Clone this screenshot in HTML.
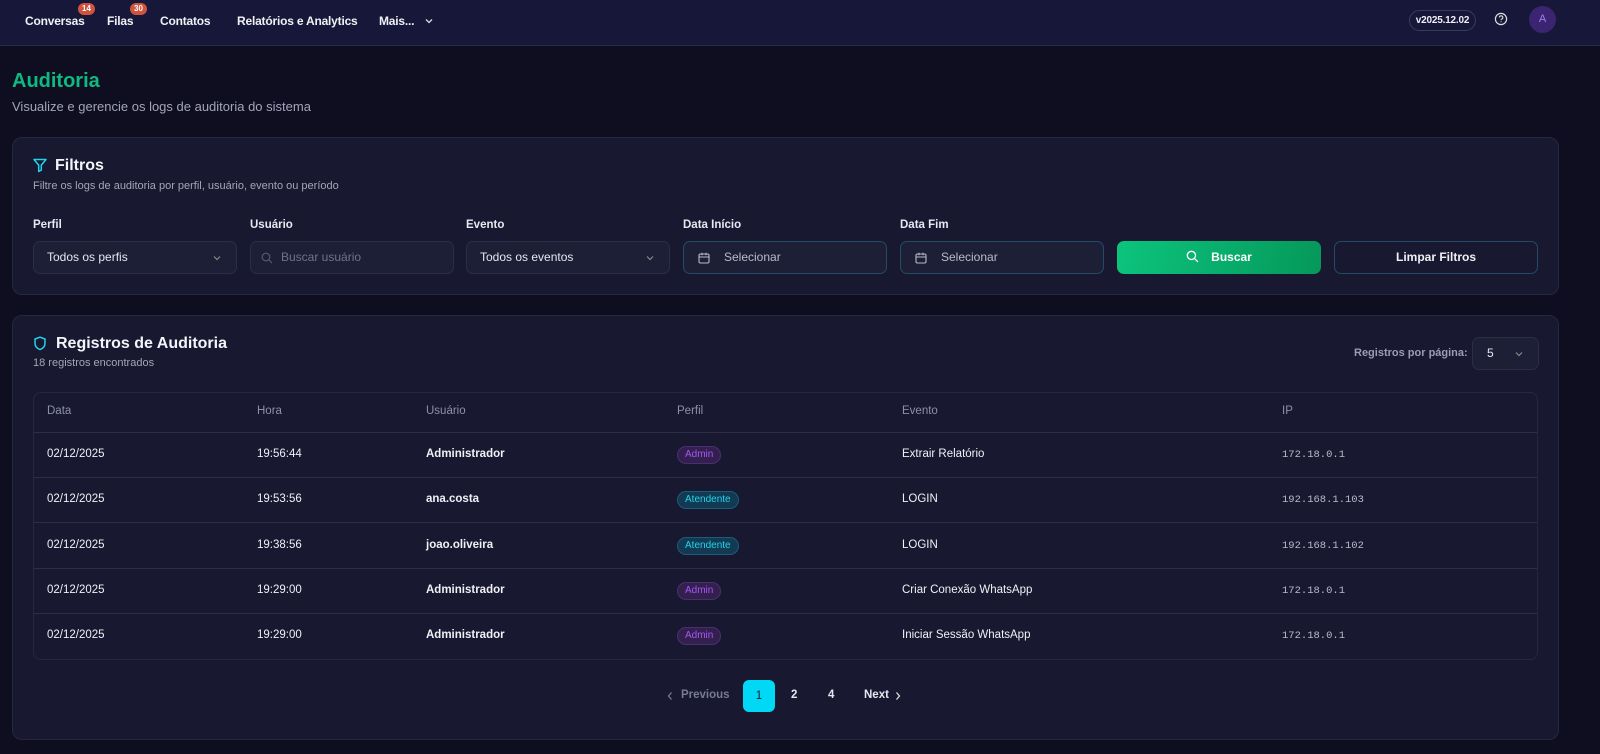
<!DOCTYPE html>
<html><head><meta charset="utf-8"><style>
*{box-sizing:border-box;margin:0;padding:0}
body{width:1600px;height:754px;overflow:hidden;background:#0e0e20;font-family:"Liberation Sans",sans-serif;color:#e6e7f0;position:relative}
.abs{position:absolute}
.nav{left:0;top:0;width:1600px;height:46px;background:#17173a;border-bottom:1px solid #2a2c4a}
.nav span.l{position:absolute;top:14px;font-size:12px;font-weight:bold;color:#f0f0f5;letter-spacing:-0.2px}
.badge{position:absolute;top:3px;height:12px;border-radius:6px;background:#d0533e;color:#fff;font-size:8px;font-weight:bold;padding:0 4px;line-height:12px}
.card{background:#181830;border:1px solid #26283f;border-radius:10px}
.lab{font-size:11.5px;font-weight:bold;color:#e8e8f0;top:219px}
.inp{top:241px;height:33px;width:204px;border:1px solid #2b2e45;background:#1d1f36;border-radius:7px;font-size:12px;color:#e6e7f0;padding:0 13px;line-height:31px}
.th{font-size:11.5px;color:#8e91a8;top:405px}
.cell{font-size:11.5px;color:#f0f0f5}
.mono{font-family:"Liberation Mono",monospace;font-size:10.5px;color:#b8bacb}
.pill{font-size:10px;border-radius:9px;padding:0 7px;height:18px;line-height:16px}
.adm{background:#33204f;border:1px solid #4a2e72;color:#a855f7}
.ate{background:#123a52;border:1px solid #1d5b78;color:#22d3ee}
.hr{left:33px;width:1504px;height:1px;background:#2b2e45}
</style></head><body>
<div class="abs nav">
<span class="l" style="left:25px">Conversas</span><span class="badge" style="left:78px">14</span>
<span class="l" style="left:107px">Filas</span><span class="badge" style="left:130px">30</span>
<span class="l" style="left:160px">Contatos</span>
<span class="l" style="left:237px">Relatórios e Analytics</span>
<span class="l" style="left:379px">Mais...</span>
<svg class="abs" style="left:424px;top:16px" width="10" height="10" viewBox="0 0 10 10"><path d="M2 3.5l3 3 3-3" fill="none" stroke="#ddd" stroke-width="1.3"/></svg>
<div class="abs" style="left:1409px;top:10px;width:67px;height:21px;border:1px solid #3a3d58;border-radius:11px;font-size:10px;font-weight:bold;text-align:center;line-height:19px;color:#f0f0f5;letter-spacing:-0.2px">v2025.12.02</div>
<svg class="abs" style="left:1494px;top:12px" width="14" height="14" viewBox="0 0 14 14"><circle cx="7" cy="7" r="5.6" fill="none" stroke="#ddd" stroke-width="1.2"/><path d="M5.4 5.5a1.7 1.7 0 1 1 2.2 1.6c-.5.2-.6.5-.6 1" fill="none" stroke="#ddd" stroke-width="1.1"/><circle cx="7" cy="9.8" r=".6" fill="#ddd"/></svg>
<div class="abs" style="left:1529px;top:6px;width:27px;height:27px;border-radius:50%;background:#3b2470;color:#a87bf5;font-size:11px;text-align:center;line-height:27px">A</div>
</div>
<div class="abs" style="left:12px;top:70px;font-size:20px;font-weight:bold;color:#10b981">Auditoria</div>
<div class="abs" style="left:12px;top:99px;font-size:13px;color:#a3a5b8">Visualize e gerencie os logs de auditoria do sistema</div>

<div class="abs card" style="left:12px;top:137px;width:1547px;height:158px"></div>
<svg class="abs" style="left:32px;top:157px" width="16" height="16" viewBox="0 0 16 16"><path d="M2 2.5h12l-4.7 5.6v5l-2.6 1.4V8.1z" fill="none" stroke="#22d3ee" stroke-width="1.5" stroke-linejoin="round"/></svg>
<div class="abs" style="left:55px;top:157px;font-size:16px;font-weight:bold;color:#f4f4fa">Filtros</div>
<div class="abs" style="left:33px;top:180px;font-size:11px;color:#a3a5b8">Filtre os logs de auditoria por perfil, usuário, evento ou período</div>
<div class="abs lab" style="left:33px">Perfil</div>
<div class="abs lab" style="left:250px">Usuário</div>
<div class="abs lab" style="left:466px">Evento</div>
<div class="abs lab" style="left:683px">Data Início</div>
<div class="abs lab" style="left:900px">Data Fim</div>
<div class="abs inp" style="left:33px">Todos os perfis<svg class="abs" style="right:14px;top:11px" width="10" height="10" viewBox="0 0 10 10"><path d="M2 3.5l3 3 3-3" fill="none" stroke="#888" stroke-width="1.2"/></svg></div>
<div class="abs inp" style="left:250px;padding-left:30px;color:#6f7288">Buscar usuário<svg class="abs" style="left:10px;top:10px" width="12" height="12" viewBox="0 0 12 12"><circle cx="5" cy="5" r="3.8" fill="none" stroke="#555870" stroke-width="1.2"/><path d="M8 8l3 3" stroke="#555870" stroke-width="1.2"/></svg></div>
<div class="abs inp" style="left:466px">Todos os eventos<svg class="abs" style="right:14px;top:11px" width="10" height="10" viewBox="0 0 10 10"><path d="M2 3.5l3 3 3-3" fill="none" stroke="#888" stroke-width="1.2"/></svg></div>
<div class="abs inp" style="left:683px;padding-left:40px;border-color:#244a66;color:#b8bacb">Selecionar<svg class="abs" style="left:14px;top:10px" width="12" height="12" viewBox="0 0 12 12"><rect x="1" y="2" width="10" height="9" rx="1.5" fill="none" stroke="#b8bacb" stroke-width="1.1"/><path d="M1 5h10M4 .8v2.4M8 .8v2.4" stroke="#b8bacb" stroke-width="1.1"/></svg></div>
<div class="abs inp" style="left:900px;padding-left:40px;border-color:#244a66;color:#b8bacb">Selecionar<svg class="abs" style="left:14px;top:10px" width="12" height="12" viewBox="0 0 12 12"><rect x="1" y="2" width="10" height="9" rx="1.5" fill="none" stroke="#b8bacb" stroke-width="1.1"/><path d="M1 5h10M4 .8v2.4M8 .8v2.4" stroke="#b8bacb" stroke-width="1.1"/></svg></div>
<div class="abs" style="left:1117px;top:241px;width:204px;height:33px;border-radius:7px;background:linear-gradient(100deg,#0cc47d,#05985a);font-size:12px;font-weight:bold;text-align:center;line-height:33px;color:#fff"><svg style="vertical-align:-2px;margin-right:12px" width="13" height="13" viewBox="0 0 12 12"><circle cx="5" cy="5" r="3.8" fill="none" stroke="#fff" stroke-width="1.2"/><path d="M8 8l3 3" stroke="#fff" stroke-width="1.2"/></svg>Buscar</div>
<div class="abs" style="left:1334px;top:241px;width:204px;height:33px;border-radius:7px;border:1px solid #244a66;font-size:12px;font-weight:bold;text-align:center;line-height:31px;color:#f0f0f5">Limpar Filtros</div>

<div class="abs card" style="left:12px;top:315px;width:1547px;height:425px"></div>
<svg class="abs" style="left:33px;top:336px" width="14" height="15" viewBox="0 0 14 15"><path d="M7 1.2l5 1.8v4.2c0 3.2-2.3 5.3-5 6.4-2.7-1.1-5-3.2-5-6.4V3z" fill="none" stroke="#22d3ee" stroke-width="1.5" stroke-linejoin="round"/></svg>
<div class="abs" style="left:56px;top:335px;font-size:16px;font-weight:bold;color:#f4f4fa">Registros de Auditoria</div>
<div class="abs" style="left:33px;top:357px;font-size:11px;color:#a3a5b8">18 registros encontrados</div>
<div class="abs" style="left:1354px;top:347px;font-size:11px;font-weight:bold;color:#9a9db3">Registros por página:</div>
<div class="abs" style="left:1472px;top:337px;width:67px;height:33px;border:1px solid #2b2e45;background:#1d1f36;border-radius:7px;font-size:12px;padding-left:14px;line-height:31px">5<svg class="abs" style="right:14px;top:11px" width="10" height="10" viewBox="0 0 10 10"><path d="M2 3.5l3 3 3-3" fill="none" stroke="#888" stroke-width="1.2"/></svg></div>

<div class="abs" style="left:33px;top:392px;width:1505px;height:268px;border:1px solid #26283f;border-radius:8px"></div>
<div class="abs th" style="left:47px">Data</div><div class="abs th" style="left:257px">Hora</div><div class="abs th" style="left:426px">Usuário</div><div class="abs th" style="left:677px">Perfil</div><div class="abs th" style="left:902px">Evento</div><div class="abs th" style="left:1282px">IP</div>
<div class="abs hr" style="top:432px"></div><div class="abs hr" style="top:477px"></div><div class="abs hr" style="top:522px"></div><div class="abs hr" style="top:568px"></div><div class="abs hr" style="top:613px"></div>

<div class="abs cell" style="left:47px;top:448px">02/12/2025</div><div class="abs cell" style="left:257px;top:448px">19:56:44</div><div class="abs cell" style="left:426px;top:448px;font-weight:bold">Administrador</div><div class="abs pill adm" style="left:677px;top:446px">Admin</div><div class="abs cell" style="left:902px;top:448px">Extrair Relatório</div><div class="abs mono" style="left:1282px;top:449px">172.18.0.1</div>
<div class="abs cell" style="left:47px;top:493px">02/12/2025</div><div class="abs cell" style="left:257px;top:493px">19:53:56</div><div class="abs cell" style="left:426px;top:493px;font-weight:bold">ana.costa</div><div class="abs pill ate" style="left:677px;top:491px">Atendente</div><div class="abs cell" style="left:902px;top:493px">LOGIN</div><div class="abs mono" style="left:1282px;top:494px">192.168.1.103</div>
<div class="abs cell" style="left:47px;top:539px">02/12/2025</div><div class="abs cell" style="left:257px;top:539px">19:38:56</div><div class="abs cell" style="left:426px;top:539px;font-weight:bold">joao.oliveira</div><div class="abs pill ate" style="left:677px;top:537px">Atendente</div><div class="abs cell" style="left:902px;top:539px">LOGIN</div><div class="abs mono" style="left:1282px;top:540px">192.168.1.102</div>
<div class="abs cell" style="left:47px;top:584px">02/12/2025</div><div class="abs cell" style="left:257px;top:584px">19:29:00</div><div class="abs cell" style="left:426px;top:584px;font-weight:bold">Administrador</div><div class="abs pill adm" style="left:677px;top:582px">Admin</div><div class="abs cell" style="left:902px;top:584px">Criar Conexão WhatsApp</div><div class="abs mono" style="left:1282px;top:585px">172.18.0.1</div>
<div class="abs cell" style="left:47px;top:629px">02/12/2025</div><div class="abs cell" style="left:257px;top:629px">19:29:00</div><div class="abs cell" style="left:426px;top:629px;font-weight:bold">Administrador</div><div class="abs pill adm" style="left:677px;top:627px">Admin</div><div class="abs cell" style="left:902px;top:629px">Iniciar Sessão WhatsApp</div><div class="abs mono" style="left:1282px;top:630px">172.18.0.1</div>

<svg class="abs" style="left:666px;top:691px" width="8" height="10" viewBox="0 0 8 10"><path d="M5.5 1.5L2.5 5l3 3.5" fill="none" stroke="#777a92" stroke-width="1.3"/></svg>
<div class="abs" style="left:681px;top:689px;font-size:11.5px;font-weight:bold;color:#777a92">Previous</div>
<div class="abs" style="left:743px;top:680px;width:32px;height:32px;border-radius:6px;background:#00d8f5;color:#0e1a2a;font-size:11.5px;text-align:center;line-height:32px">1</div>
<div class="abs" style="left:791px;top:689px;font-size:11.5px;font-weight:bold">2</div>
<div class="abs" style="left:828px;top:689px;font-size:11.5px;font-weight:bold">4</div>
<div class="abs" style="left:864px;top:689px;font-size:11.5px;font-weight:bold">Next</div>
<svg class="abs" style="left:894px;top:691px" width="8" height="10" viewBox="0 0 8 10"><path d="M2.5 1.5L5.5 5l-3 3.5" fill="none" stroke="#ddd" stroke-width="1.3"/></svg>
</body></html>
